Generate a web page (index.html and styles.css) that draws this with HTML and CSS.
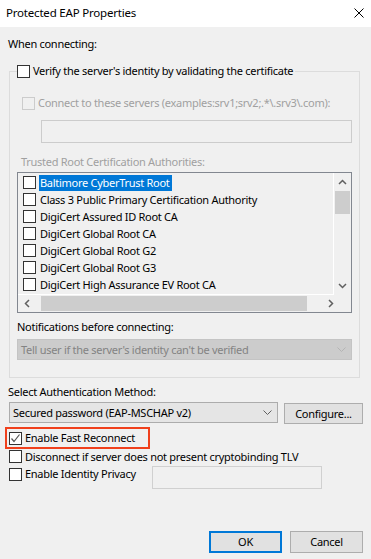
FILE: index.html
```html
<!DOCTYPE html>
<html lang="en">
<head>
    <meta charset="UTF-8">
    <title>Protected EAP Properties</title>
    <link rel="stylesheet" href="styles.css">
</head>
<body>
<div class="window">
    <div class="titlebar">
        <span class="title">Protected EAP Properties</span>
        <svg class="close" width="10" height="10" viewBox="0 0 10 10"><path d="M0.5 0.5 L9.5 9.5 M9.5 0.5 L0.5 9.5" stroke="#000" stroke-width="1"/></svg>
    </div>

    <div class="content">
        <div class="label">When connecting:</div>

        <fieldset class="group">
            <legend class="check"><span class="cb"></span>Verify the server's identity by validating the certificate</legend>

            <div class="check disabled connect"><span class="cb"></span>Connect to these servers (examples:srv1;srv2;.*\.srv3\.com):</div>
            <div class="textbox servers"></div>

            <div class="label disabled trusted">Trusted Root Certification Authorities:</div>
            <div class="listbox">
                <div class="list-items">
                    <div class="item"><span class="cb"></span><span class="name selected">Baltimore CyberTrust Root</span></div>
                    <div class="item"><span class="cb"></span><span class="name">Class 3 Public Primary Certification Authority</span></div>
                    <div class="item"><span class="cb"></span><span class="name">DigiCert Assured ID Root CA</span></div>
                    <div class="item"><span class="cb"></span><span class="name">DigiCert Global Root CA</span></div>
                    <div class="item"><span class="cb"></span><span class="name">DigiCert Global Root G2</span></div>
                    <div class="item"><span class="cb"></span><span class="name">DigiCert Global Root G3</span></div>
                    <div class="item"><span class="cb"></span><span class="name">DigiCert High Assurance EV Root CA</span></div>
                </div>
                <div class="vscroll">
                    <svg class="arrow" width="9" height="6" viewBox="0 0 9 6"><polyline points="1,5 4.5,1.5 8,5" fill="none" stroke="#606060" stroke-width="1.5"/></svg>
                    <div class="vthumb"></div>
                    <div class="vtrack"></div>
                    <svg class="arrow" width="9" height="6" viewBox="0 0 9 6"><polyline points="1,1 4.5,4.5 8,1" fill="none" stroke="#606060" stroke-width="1.5"/></svg>
                </div>
                <div class="hscroll">
                    <svg class="arrow" width="6" height="9" viewBox="0 0 6 9"><polyline points="5,1 1.5,4.5 5,8" fill="none" stroke="#606060" stroke-width="1.5"/></svg>
                    <div class="hthumb"></div>
                    <svg class="arrow" width="6" height="9" viewBox="0 0 6 9"><polyline points="1,1 4.5,4.5 1,8" fill="none" stroke="#606060" stroke-width="1.5"/></svg>
                </div>
                <div class="corner"></div>
            </div>

            <div class="label notif">Notifications before connecting:</div>
            <div class="combo disabled">
                <span>Tell user if the server's identity can't be verified</span>
                <svg width="9" height="5" viewBox="0 0 9 5"><polyline points="0.5,0.5 4.5,4.5 8.5,0.5" fill="none" stroke="#b4b4b4" stroke-width="1"/></svg>
            </div>
        </fieldset>

        <div class="label method">Select Authentication Method:</div>
        <div class="auth-row">
            <div class="combo auth">
                <span>Secured password (EAP-MSCHAP v2)</span>
                <svg width="9" height="5" viewBox="0 0 9 5"><polyline points="0.5,0.5 4.5,4.5 8.5,0.5" fill="none" stroke="#606060" stroke-width="1"/></svg>
            </div>
            <div class="button configure">Configure...</div>
        </div>

        <div class="check highlight"><span class="cb checked"><svg width="11" height="11" viewBox="0 0 11 11"><polyline points="1.5,5.5 4,8.5 9.5,1.5" fill="none" stroke="#555" stroke-width="1.2"/></svg></span>Enable Fast Reconnect</div>
        <div class="check option"><span class="cb"></span>Disconnect if server does not present cryptobinding TLV</div>
        <div class="identity-row">
            <div class="check option identity"><span class="cb"></span>Enable Identity Privacy</div>
            <div class="textbox identity-field"></div>
        </div>

        <div class="buttons">
            <div class="button default">OK</div>
            <div class="button">Cancel</div>
        </div>
    </div>
</div>
</body>
</html>
```

FILE: styles.css
```css
body {
    margin: 0;
    font-family: "Noto Sans", sans-serif;
    font-size: 11px;
    letter-spacing: -0.28px;
    color: #000;
    background: #f0f0f0;
}
.window {
    width: 371px;
    height: 559px;
    background: #f0f0f0;
}
.titlebar {
    height: 27px;
    background: #fff;
    display: flex;
    align-items: center;
    justify-content: space-between;
    padding: 0 7px 0 6px;
    font-size: 11.5px;
    letter-spacing: -0.2px;
}
.title {
    margin-top: -2px;
}
.close {
    margin-top: -2px;
}
.content {
    padding: 9px 8px 0 8px;
}
.label {
    height: 16px;
    line-height: 16px;
}
.disabled {
    color: #a0a0a0;
}

/* checkboxes */
.check {
    display: flex;
    align-items: center;
    height: 16px;
    line-height: 16px;
    white-space: nowrap;
}
.cb {
    width: 11px;
    height: 11px;
    border: 1px solid #333;
    background: #fff;
    margin-right: 3px;
    flex-shrink: 0;
    display: flex;
}
.disabled .cb {
    border-color: #cccccc;
    background: #f0f0f0;
}

/* group box */
.group {
    margin: 12px 3px 0 1px;
    padding: 0 7px 17px 7px;
    border: 1px solid #dcdcdc;
    min-width: 0;
}
.group legend {
    padding: 0 2px 0 0;
    height: 14px;
}
.connect {
    margin-top: 17px;
    padding-left: 5px;
}
.textbox {
    height: 21px;
    border: 1px solid #cccccc;
    background: #f0f0f0;
}
.servers {
    margin: 9px 0 0 24px;
}
.trusted {
    margin-top: 11px;
    padding-left: 4px;
}

/* list of certificates */
.listbox {
    margin-top: 2px;
    height: 139px;
    border: 1px solid #828790;
    display: grid;
    grid-template-columns: 1fr 17px;
    grid-template-rows: 1fr 17px;
    overflow: hidden;
}
.list-items {
    padding: 1px 0 0 5px;
    border-right: 1px solid #fff;
    border-bottom: 1px solid #fff;
    overflow: hidden;
}
.item {
    display: flex;
    align-items: flex-start;
    height: 17px;
    white-space: nowrap;
}
.item .cb {
    margin-top: 2px;
}
.name {
    margin-top: 1px;
    height: 16px;
    line-height: 16px;
    padding: 0 2px 0 1px;
}
.selected {
    background: #0078d7;
    color: #fff;
}
.vscroll {
    display: flex;
    flex-direction: column;
    align-items: center;
}
.vscroll .arrow {
    margin: 6px 0;
}
.vthumb {
    width: 15px;
    height: 23px;
    background: #cdcdcd;
}
.vtrack {
    flex: 1;
}
.hscroll {
    display: flex;
    align-items: center;
    padding: 0 0 0 6px;
}
.hthumb {
    height: 15px;
    width: 266px;
    margin-left: 11px;
    background: #cdcdcd;
}
.hscroll .arrow:last-child {
    margin-left: 21px;
}
.corner {
    background: #f0f0f0;
}

.notif {
    margin-top: 6px;
}

/* combo boxes */
.combo {
    height: 19px;
    display: flex;
    align-items: center;
    justify-content: space-between;
    padding: 0 5px 0 3px;
    white-space: nowrap;
}
.combo.disabled {
    margin-top: 4px;
    background: #cccccc;
    border: 1px solid #c4c4c4;
    color: #838383;
}
.method {
    margin-top: 6px;
}
.auth-row {
    display: flex;
    margin-top: 2px;
}
.combo.auth {
    width: 259px;
    margin-left: 1px;
    background: #e5e5e5;
    border: 1px solid #acacac;
}
.button {
    height: 19px;
    line-height: 19px;
    text-align: center;
    background: #e1e1e1;
    border: 1px solid #adadad;
}
.configure {
    width: 77px;
    margin-left: auto;
    margin-top: 1px;
}

/* options below */
.highlight {
    width: 137px;
    height: 18px;
    margin: 3px 0 0 -3px;
    padding: 0 2px;
    border: 2px solid #f0401c;
}
.option {
    height: 17px;
    align-items: flex-start;
    padding-left: 1px;
}
.option .cb {
    margin-top: 1px;
}
.identity-row {
    display: flex;
    align-items: flex-start;
}
.identity {
    width: 143px;
    height: 23px;
}
.identity .cb {
    margin-top: 2px;
}
.identity-field {
    width: 168px;
    background: #f0f0f0;
    border-color: #d0d0d0;
}

.buttons {
    display: flex;
    justify-content: flex-end;
    gap: 8px;
    margin-top: 42px;
}
.buttons .button {
    width: 71px;
    height: 20px;
    line-height: 20px;
}
.buttons .default {
    width: 69px;
    height: 18px;
    line-height: 18px;
    border: 2px solid #0078d7;
}
```
